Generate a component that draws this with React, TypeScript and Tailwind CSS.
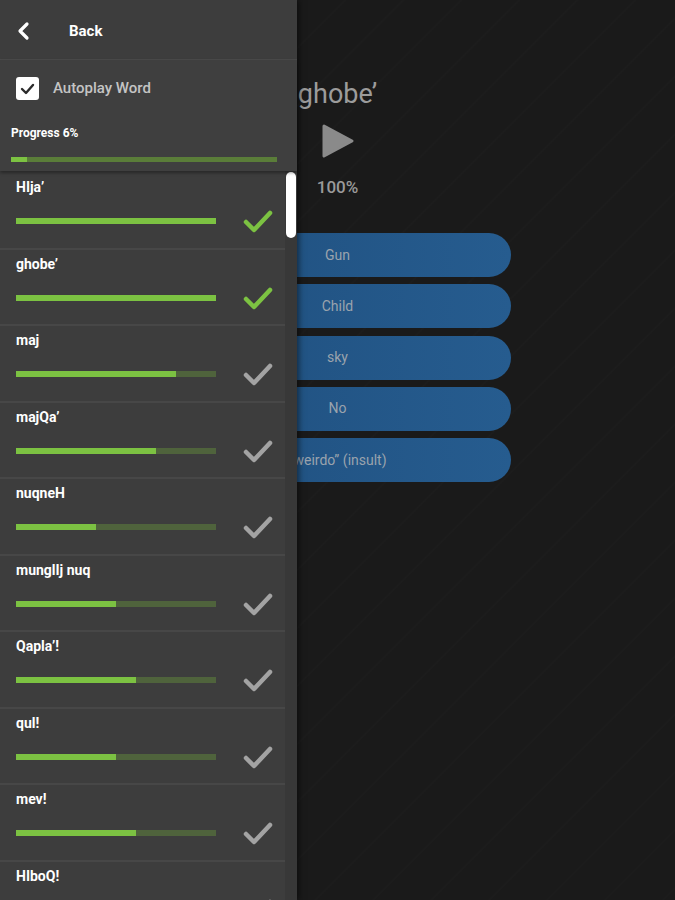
import React from "react";

const words: { name: string; pct: number }[] = [
  { name: "HIja’", pct: 100 },
  { name: "ghobe’", pct: 100 },
  { name: "maj", pct: 80 },
  { name: "majQa’", pct: 70 },
  { name: "nuqneH", pct: 40 },
  { name: "munglIj nuq", pct: 50 },
  { name: "Qapla’!", pct: 60 },
  { name: "qul!", pct: 50 },
  { name: "mev!", pct: 60 },
  { name: "HIboQ!", pct: 40 },
];

const answers = ["Gun", "Child", "sky", "No", "“weirdo” (insult)"];

function Check({ done }: { done: boolean }) {
  return (
    <svg width="32" height="26" viewBox="0 0 32 26" className="shrink-0">
      <path
        d="M4 14 L12 22 L28 5"
        fill="none"
        stroke={done ? "#7cc242" : "#a3a3a3"}
        strokeWidth="4.5"
        strokeLinecap="round"
        strokeLinejoin="round"
      />
    </svg>
  );
}

export default function App() {
  return (
    <div
      className="relative w-[675px] h-[900px] overflow-hidden bg-[#1a1a1a] bg-[repeating-linear-gradient(135deg,transparent_0px,transparent_38px,rgba(255,255,255,0.01)_39px,transparent_41px)]"
      style={{ fontFamily: "Roboto, 'Liberation Sans', sans-serif" }}
    >
      {/* Main content */}
      <div className="flex flex-col items-center pt-[74px]">
        <div className="text-[27px] leading-[40px] text-[#9c9c9c]">ghobe’</div>
        <div className="mt-[9px] h-[36px] flex items-center justify-center">
          <svg width="34" height="36" viewBox="0 0 34 36">
            <path
              d="M3 3 L31 18 L3 33 Z"
              fill="#8a8a8a"
              stroke="#8a8a8a"
              strokeWidth="3"
              strokeLinejoin="round"
            />
          </svg>
        </div>
        <div className="mt-[16px] text-[17px] leading-[24px] text-[#9a9a9a] font-medium">100%</div>
        <div className="mt-[34px] flex flex-col gap-[7.3px] w-[347px]">
          {answers.map((a) => (
            <div
              key={a}
              className="h-[44px] rounded-full bg-[linear-gradient(90deg,#1f4f7e,#265c8f)] flex items-center justify-center text-[14px] text-[#9aa3ad]"
            >
              {a}
            </div>
          ))}
        </div>
      </div>

      {/* Drawer */}
      <div className="absolute left-0 top-0 h-full w-[297px] bg-[#3d3d3d] flex flex-col shadow-[2px_0_6px_rgba(0,0,0,0.5)]">
        <div className="h-[60px] pt-[3px] flex items-center border-b border-[#4a4a4a] shrink-0">
          <svg width="16" height="20" viewBox="0 0 16 20" className="ml-[15px]">
            <path
              d="M12 3 L5 10 L12 17"
              fill="none"
              stroke="#ffffff"
              strokeWidth="3.2"
              strokeLinecap="round"
              strokeLinejoin="round"
            />
          </svg>
          <span className="ml-[38px] text-[15px] font-bold text-white">Back</span>
        </div>
        <div className="h-[111px] shrink-0 flex flex-col bg-[#3f3f3f] shadow-[0_2px_3px_rgba(0,0,0,0.35)] relative z-10">
          <div className="flex items-center mt-[17px] h-[23px]">
            <div className="ml-[16px] w-[23px] h-[23px] rounded-[3px] bg-white flex items-center justify-center">
              <svg width="15" height="12" viewBox="0 0 15 12">
                <path
                  d="M2 6 L6 10 L13 2"
                  fill="none"
                  stroke="#2b2b2b"
                  strokeWidth="2.4"
                  strokeLinecap="round"
                  strokeLinejoin="round"
                />
              </svg>
            </div>
            <span className="ml-[14px] text-[15px] font-medium text-[#c4c4c4]">Autoplay Word</span>
          </div>
          <div className="ml-[11px] mt-[25px] text-[12px] leading-[16px] font-bold text-white">Progress 6%</div>
          <div className="ml-[11px] mt-[16px] w-[266px] h-[5px] bg-[#5a7d39] relative">
            <div className="h-full w-[16px] bg-[#7cc242]" />
          </div>
        </div>
        <div className="flex flex-1 min-h-0">
          <div className="w-[285px] flex flex-col overflow-hidden">
            {words.map((w, i) => (
              <div
                key={w.name}
                className={`h-[76.5px] shrink-0 flex flex-col ${i === 0 ? "" : "border-t-2 border-[#474747]"}`}
              >
                <div className={`ml-[16px] ${i === 0 ? "mt-[6px]" : "mt-[4px]"} text-[14px] leading-[20px] font-bold text-white`}>
                  {w.name}
                </div>
                <div className="flex items-center mt-[11px]">
                  <div className="ml-[16px] w-[200px] h-[6px] bg-[#4f633c] relative">
                    <div className="h-full bg-[#7cc242]" style={{ width: `${w.pct}%` }} />
                  </div>
                  <div className="ml-[26px]">
                    <Check done={w.pct === 100} />
                  </div>
                </div>
              </div>
            ))}
          </div>
          <div className="w-[12px] bg-[#383838] relative">
            <div className="absolute left-[1px] top-[1px] w-[10px] h-[66px] rounded-[5px] bg-white" />
          </div>
        </div>
      </div>
    </div>
  );
}
